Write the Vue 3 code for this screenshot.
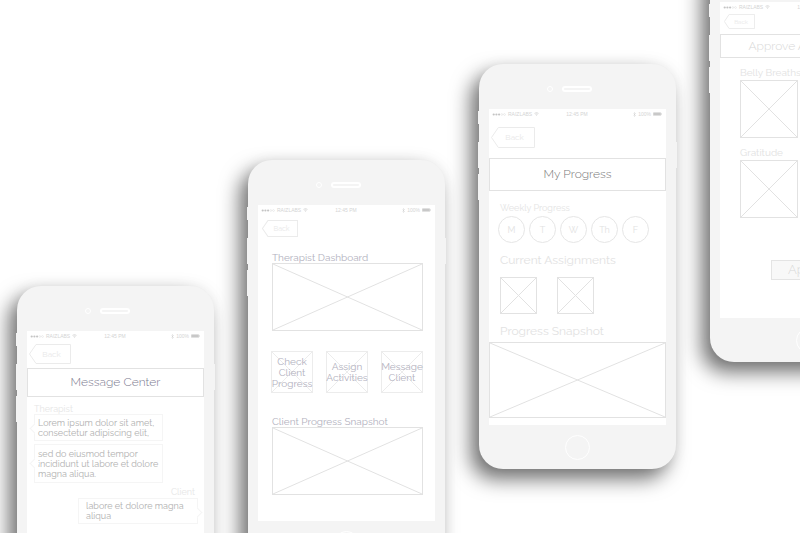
<script setup>
import { h } from 'vue'

const days = ['M', 'T', 'W', 'Th', 'F']
const tiles = ['Check Client Progress', 'Assign Activities', 'Message Client']
const activities = ['Belly Breaths', 'Gratitude']
const assignments = [1, 2]
const screens = ['messages', 'dashboard', 'progress', 'approve']

// Stretching placeholder with both diagonals
const Cross = () =>
  h('svg', { viewBox: '0 0 100 100', preserveAspectRatio: 'none', 'aria-hidden': 'true' }, [
    h('path', {
      d: 'M0 0L100 100M100 0L0 100',
      fill: 'none',
      stroke: 'currentColor',
      'vector-effect': 'non-scaling-stroke',
    }),
  ])
</script>

<template>
  <main class="stage">
    <section v-for="screen in screens" :key="screen" class="phone" :class="screen">
      <i class="key mute"></i>
      <i class="key up"></i>
      <i class="key down"></i>
      <i class="key power"></i>
      <div class="bezel">
        <i class="camera"></i>
        <i class="speaker"></i>
      </div>

      <div class="screen">
        <div class="status">
          <span class="carrier">
            <svg class="signal" viewBox="0 0 14 3">
              <circle v-for="n in 3" :key="n" :cx="n * 2.7 - 1" cy="1.5" r="1.1" fill="#c4c4c4" />
              <circle cx="9.8" cy="1.5" r=".9" fill="none" stroke="#ddd" stroke-width=".5" />
              <circle cx="12.5" cy="1.5" r=".9" fill="none" stroke="#ddd" stroke-width=".5" />
            </svg>
            RAIZLABS
            <svg class="wifi" viewBox="0 0 10 8">
              <path d="M.8 2.8Q5-.8 9.2 2.8M2.4 4.6Q5 2.4 7.6 4.6" fill="none" stroke="#cfcfcf" stroke-width="1.3" />
              <path d="M3.5 5.8Q5 4.6 6.5 5.8L5 7.6Z" fill="#cfcfcf" />
            </svg>
          </span>
          <span>12:45 PM</span>
          <span class="power-info">
            <svg class="bluetooth" viewBox="0 0 6 10">
              <path d="M1 3L5 7L3 9V1L5 3L1 7" fill="none" stroke="#ccc" stroke-width=".9" />
            </svg>
            100%
            <svg class="battery" viewBox="0 0 20 8">
              <rect x=".5" y=".5" width="17" height="7" rx="1.5" fill="#c8c8c8" stroke="#ddd" />
              <path d="M19 2.5V5.5" stroke="#ccc" stroke-width="1.5" />
            </svg>
          </span>
        </div>

        <button class="back" type="button">
          <svg viewBox="0 0 42 20" preserveAspectRatio="none" aria-hidden="true">
            <path d="M7 .5H41.5V19.5H7L.5 10Z" fill="none" stroke="#ebebeb" vector-effect="non-scaling-stroke" />
          </svg>
          <span>Back</span>
        </button>

        <template v-if="screen === 'messages'">
          <h1 class="title">Message Center</h1>
          <div class="thread">
            <h2 class="sender">Therapist</h2>
            <p class="bubble">Lorem ipsum dolor sit amet,<br />consectetur adipiscing elit,</p>
            <p class="bubble long">sed do eiusmod tempor<br />incididunt ut labore et dolore<br />magna aliqua.</p>
            <h2 class="sender own">Client</h2>
            <p class="bubble reply">labore et dolore magna<br />aliqua</p>
          </div>
        </template>

        <div v-else-if="screen === 'dashboard'" class="board">
          <h2 class="caption">Therapist Dashboard</h2>
          <div class="frame wide"><Cross /></div>
          <div class="tiles">
            <button v-for="tile in tiles" :key="tile" class="tile" type="button">
              <Cross />
              <span>{{ tile }}</span>
            </button>
          </div>
          <h2 class="caption">Client Progress Snapshot</h2>
          <div class="frame wide"><Cross /></div>
        </div>

        <template v-else-if="screen === 'progress'">
          <h1 class="title">My Progress</h1>
          <div class="summary">
            <h2 class="small">Weekly Progress</h2>
            <div class="days">
              <button v-for="day in days" :key="day" class="day" type="button">{{ day }}</button>
            </div>
            <h2 class="large">Current Assignments</h2>
            <div class="assignments">
              <div v-for="a in assignments" :key="a" class="frame thumb"><Cross /></div>
            </div>
            <h2 class="large">Progress Snapshot</h2>
          </div>
          <div class="frame snapshot"><Cross /></div>
        </template>

        <template v-else>
          <h1 class="title">Approve Assignments</h1>
          <div class="review">
            <template v-for="name in activities" :key="name">
              <h2 class="activity">{{ name }}</h2>
              <div class="frame card"><Cross /></div>
            </template>
            <button class="submit" type="button">Approve</button>
          </div>
        </template>
      </div>

      <div class="chin">
        <button class="home" type="button" aria-label="Home"></button>
      </div>
    </section>
  </main>
</template>

<style>
body {
  margin: 0;
  background: #fff;
}
</style>

<style scoped>
.stage {
  display: flex;
  align-items: flex-start;
  gap: 34px;
  height: 100vh;
  padding-left: 17px;
  box-sizing: border-box;
  overflow: hidden;
  font-family: Raleway, Lato, "Open Sans", sans-serif;
  color: #b0b0b0;
}

.stage *,
.stage :deep(svg) {
  box-sizing: border-box;
}

h1,
h2,
p {
  margin: 0;
  font-weight: 400;
}

button {
  padding: 0;
  border: 0;
  background: none;
  color: inherit;
  font: inherit;
  cursor: pointer;
}

.phone {
  position: relative;
  flex: 0 0 197px;
  border-radius: 24px;
  background: #f4f4f4;
  box-shadow:
    -8px 10px 20px rgba(0, 0, 0, 0.56),
    0 0 16px rgba(0, 0, 0, 0.04);
}

.messages { margin-top: 286px; }
.dashboard { margin-top: 160px; }
.progress { margin-top: 64px; }
.approve { margin-top: -43px; }

.key {
  position: absolute;
  left: -1px;
  width: 2px;
  height: 26px;
  background: #f4f4f4;
}

.mute { top: 47px; height: 13px; }
.up { top: 78px; }
.down { top: 110px; }
.power { top: 78px; left: auto; right: -1px; }

.bezel {
  display: flex;
  align-items: center;
  gap: 9px;
  height: 45px;
  padding: 4px 0 0 68px;
}

.camera {
  width: 6px;
  height: 6px;
  border: 1px solid #fff;
  border-radius: 50%;
}

.speaker {
  width: 30px;
  height: 6px;
  border: 2px solid #fff;
  border-radius: 3px;
}

.screen {
  min-height: 316px;
  margin: 0 10px;
  background: #fff;
}

.chin {
  display: flex;
  align-items: center;
  justify-content: center;
  height: 44px;
}

.home {
  width: 25px;
  height: 25px;
  border: 1px solid #fff;
  border-radius: 50%;
}

.status {
  display: grid;
  grid-template-columns: 1fr auto 1fr;
  align-items: center;
  height: 10px;
  padding: 0 4px 0 3px;
  font: 5px/10px "Liberation Sans", sans-serif;
  color: #d4d4d4;
}

.carrier,
.power-info {
  display: flex;
  align-items: center;
  gap: 2px;
}

.power-info { justify-content: flex-end; }
.signal { width: 14px; height: 3px; }
.wifi { width: 5px; height: 4px; }
.bluetooth { width: 3px; height: 5px; }
.battery { width: 9px; height: 4px; }

.back {
  position: relative;
  display: block;
  width: 42px;
  height: 20px;
  margin: 3px 0 0 2px;
  padding-left: 3px;
  font-size: 8px;
  line-height: 20px;
  color: #e8e8e8;
}

.back svg {
  position: absolute;
  inset: 0;
  width: 100%;
  height: 100%;
}

.dashboard .back {
  width: 36px;
  height: 17px;
  margin: 5px 0 0 4px;
  font-size: 7px;
  line-height: 17px;
}

.progress .back {
  width: 44px;
  height: 21px;
  margin: 8px 0 0 2px;
  line-height: 21px;
}

.approve .back {
  width: 31px;
  height: 15px;
  margin: 2px 0 0 4px;
  font-size: 6px;
  line-height: 15px;
}

.title {
  height: 29px;
  margin-top: 4px;
  border: 1px solid #e2e2e2;
  font-size: 12px;
  font-weight: 300;
  line-height: 27px;
  text-align: center;
  color: #7d7b90;
}

.progress .title {
  height: 33px;
  margin-top: 10px;
  line-height: 31px;
  color: #7a7a7a;
}

.approve .title {
  height: 24px;
  margin-top: 5px;
  line-height: 22px;
  color: #d8d8d8;
}

.thread {
  display: flex;
  flex-direction: column;
  align-items: flex-start;
  padding: 7px 6px 0 7px;
}

.sender {
  font-size: 9px;
  line-height: 10px;
  color: #e6e6e6;
}

.own {
  align-self: flex-end;
  margin: 4px 3px 1px 0;
}

.bubble {
  position: relative;
  width: 129px;
  border: 1px solid #f5f5f5;
  padding: 3px 3px 2px;
  font-size: 9px;
  line-height: 10px;
  white-space: nowrap;
}

.bubble::before {
  content: "";
  position: absolute;
  top: 10px;
  left: -4px;
  width: 6px;
  height: 6px;
  border: solid #f5f5f5;
  border-width: 0 0 1px 1px;
  background: #fff;
  transform: rotate(45deg);
}

.long {
  margin-top: 3px;
  padding: 4px 3px 3px;
}

.long::before { top: 15px; }

.reply {
  width: 120px;
  align-self: flex-end;
  padding: 2px 7px;
}

.reply::before {
  left: auto;
  right: -4px;
  border-width: 1px 1px 0 0;
}

.frame {
  border: 1px solid #e2e2e2;
  color: #e2e2e2;
}

.frame svg,
.tile svg {
  display: block;
  width: 100%;
  height: 100%;
}

.board { padding: 16px 12px 0 14px; }

.caption {
  font-size: 10px;
  line-height: 10px;
  color: #b2b1be;
}

.wide { height: 68px; }

.tiles {
  display: flex;
  justify-content: space-between;
  margin: 20px 0 24px -1px;
}

.tile {
  display: grid;
  place-items: center;
  width: 42px;
  height: 42px;
  border: 1px solid #ececec;
  font-size: 10px;
  line-height: 11px;
  color: #ececec;
}

.tile > * { grid-area: 1 / 1; }

.tile span {
  display: flex;
  justify-content: center;
  width: 40px;
  color: #b2b1be;
}

.summary { padding: 12px 16px 0 11px; }

.small {
  font-size: 9px;
  line-height: 10px;
  color: #e4e4e4;
}

.days {
  display: flex;
  gap: 4px;
  margin: 3px 0 9px -2px;
}

.day {
  width: 27px;
  height: 27px;
  border: 1px solid #e6e6e6;
  border-radius: 50%;
  font-size: 9px;
  color: #e2e2e2;
}

.large {
  font-size: 12px;
  line-height: 16px;
  color: #e2e2e2;
}

.assignments {
  display: flex;
  gap: 20px;
  margin: 9px 0;
}

.thumb {
  width: 37px;
  height: 37px;
}

.snapshot {
  height: 76px;
  margin: 3px 0 7px;
}

.review { padding: 9px 20px 0; }

.activity {
  font-size: 10px;
  line-height: 12px;
  color: #e2e2e2;
}

.card {
  width: 58px;
  height: 58px;
  margin: 1px 0 9px;
}

.submit {
  display: block;
  width: 75px;
  height: 20px;
  margin: 42px auto 0;
  padding-left: 16px;
  border: 1px solid #e4e4e4;
  background: #f8f8f8;
  font-size: 13px;
  font-weight: 300;
  line-height: 18px;
  text-align: left;
  color: #d8d8d8;
}
</style>
